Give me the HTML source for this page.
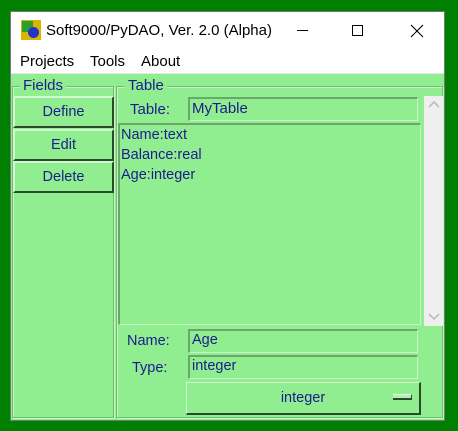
<!DOCTYPE html>
<html><head><style>
*{margin:0;padding:0;box-sizing:border-box}
body{width:458px;height:431px;background:#008000;position:relative;overflow:hidden;font-family:"Liberation Sans",sans-serif;font-size:14.5px;color:#1c1c8c}
.a{position:absolute}
.win{left:10px;top:11px;width:435px;height:410px;background:#fff;border:1px solid #777}
.grp{border:1px solid #6fbf6f;box-shadow:inset 1px 1px 0 #c6f6c6,1px 1px 0 #c6f6c6}
.lbl{background:#90ee90;padding:0 3px;line-height:14px}
.btn{background:#90ee90;border-top:2px solid #d2fad2;border-left:2px solid #d2fad2;border-right:2px solid #2a4a2a;border-bottom:2px solid #2a4a2a;text-align:center}
.ent{background:#90ee90;border-top:2px solid #6aa86a;border-left:2px solid #6aa86a;border-right:1px solid #c6f6c6;border-bottom:1px solid #c6f6c6;padding-left:2px;line-height:19px}
</style></head><body>
<div class="a win"></div>
<div class="a" style="left:21px;top:20px;width:20px;height:20px;background:#d9b400"></div>
<div class="a" style="left:22px;top:21px;width:11px;height:11px;background:#2ca02c"></div>
<div class="a" style="left:28px;top:27px;width:11px;height:11px;background:#2233cc;border-radius:50%"></div>
<div class="a" style="left:46px;top:22px;font-size:15px;color:#000">Soft9000/PyDAO, Ver. 2.0 (Alpha)</div>
<div class="a" style="left:297px;top:30px;width:11px;height:1px;background:#000"></div>
<div class="a" style="left:352px;top:25px;width:11px;height:11px;border:1px solid #000"></div>
<svg class="a" style="left:410px;top:24px" width="14" height="14"><path d="M1 1L13 13M13 1L1 13" stroke="#000" stroke-width="1.1"/></svg>
<div class="a" style="left:20px;top:53px;color:#000;font-size:15px">Projects</div>
<div class="a" style="left:90px;top:53px;color:#000;font-size:15px">Tools</div>
<div class="a" style="left:141px;top:53px;color:#000;font-size:15px">About</div>
<div class="a" style="left:11px;top:73px;width:433px;height:347px;background:#90ee90;border-top:1px solid #e6e6e6"></div>
<div class="a grp" style="left:12px;top:86px;width:102px;height:332px"></div>
<div class="a lbl" style="left:20px;top:79px;font-size:15px">Fields</div>
<div class="a btn" style="left:13px;top:96px;width:101px;height:32px;line-height:28px">Define</div>
<div class="a btn" style="left:13px;top:129px;width:101px;height:32px;line-height:28px">Edit</div>
<div class="a btn" style="left:13px;top:161px;width:101px;height:32px;line-height:28px">Delete</div>
<div class="a grp" style="left:116px;top:86px;width:327px;height:332px"></div>
<div class="a lbl" style="left:125px;top:79px;font-size:15px">Table</div>
<div class="a" style="left:130px;top:101px;font-size:15px">Table:</div>
<div class="a ent" style="left:188px;top:97px;width:230px;height:24px;font-size:15px">MyTable</div>
<div class="a ent" style="left:118px;top:123px;width:303px;height:202px;line-height:20px;padding-left:1px">Name:text<br>Balance:real<br>Age:integer</div>
<div class="a" style="left:424px;top:96px;width:19px;height:230px;background:#efefef"></div>
<svg class="a" style="left:428px;top:101px" width="12" height="8"><path d="M1 6L6 1L11 6" stroke="#b8b8b8" stroke-width="1.5" fill="none"/></svg>
<svg class="a" style="left:428px;top:313px" width="12" height="8"><path d="M1 1L6 6L11 1" stroke="#b8b8b8" stroke-width="1.5" fill="none"/></svg>
<div class="a" style="left:127px;top:333px">Name:</div>
<div class="a ent" style="left:188px;top:329px;width:230px;height:24px">Age</div>
<div class="a" style="left:132px;top:360px">Type:</div>
<div class="a ent" style="left:188px;top:355px;width:230px;height:24px">integer</div>
<div class="a btn" style="left:186px;top:382px;width:235px;height:33px;line-height:31px;border-top:1px solid #d2fad2;border-left:1px solid #d2fad2">integer</div>
<div class="a" style="left:393px;top:394px;width:19px;height:6px;background:#b0f0b0;border-right:1px solid #2a4a2a;border-bottom:2px solid #2a4a2a;border-top:1px solid #e0ffe0"></div>
</body></html>
